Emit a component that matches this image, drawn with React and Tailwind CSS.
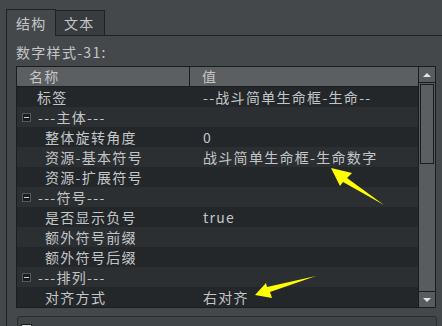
import React from "react";

const rows = [
  { name: "标签", value: "--战斗简单生命框-生命--", indent: 37 },
  { name: "---主体---", group: true },
  { name: "整体旋转角度", value: "0", indent: 45 },
  { name: "资源-基本符号", value: "战斗简单生命框-生命数字", indent: 45 },
  { name: "资源-扩展符号", value: "", indent: 45 },
  { name: "---符号---", group: true },
  { name: "是否显示负号", value: "true", indent: 45 },
  { name: "额外符号前缀", value: "", indent: 45 },
  { name: "额外符号后缀", value: "", indent: 45 },
  { name: "---排列---", group: true },
  { name: "对齐方式", value: "右对齐", indent: 45 },
];

function MinusBox() {
  return (
    <div className="w-[9px] h-[9px] bg-[#1b1d1f] border border-[#55595c] flex items-center justify-center">
      <div className="w-[5px] h-[1px] bg-[#c8cbcc]" />
    </div>
  );
}

export default function App() {
  return (
    <div
      className="relative w-[442px] h-[326px] overflow-hidden bg-[#45484b] text-[#c3c6c8] text-[14px] tracking-[1.3px]"
      style={{ fontFamily: '"Noto Sans CJK SC", "Noto Sans", sans-serif' }}
    >
      {/* tabs */}
      <div className="flex items-end pt-[9px] pl-[6px] h-[36px]">
        <div className="w-[50px] h-[27px] border border-b-0 border-[#1f2123] bg-[#45484b] flex items-center pl-[9px]">
          结构
        </div>
        <div className="w-[49px] h-[26px] border border-l-0 border-[#1f2123] bg-[#393c3f] flex items-center pl-[8px]">
          文本
        </div>
        <div className="flex-1 border-b border-[#1f2123]" />
      </div>

      {/* panel */}
      <div className="ml-[6px] border-l border-[#1f2123] h-[290px]">
        <div className="h-[30px] pl-[9px] pt-[7px] leading-[18px]">数字样式-31:</div>

        <div className="ml-[9px] flex">
          <div className="w-[403px] border border-[#1a1c1e] bg-[#25282a]">
            <div className="h-[20px] flex bg-[#5b5f62] border-b border-[#1a1c1e] leading-[19px]">
              <div className="w-[173px] border-r border-[#1a1c1e] pl-[12px]">名称</div>
              <div className="pl-[12px]">值</div>
            </div>
            {rows.map((r, i) => (
              <div
                key={i}
                className={
                  "h-[20px] flex items-center " +
                  (i % 2 === 0 ? "bg-[#24272a]" : "bg-[#2c2f32]")
                }
              >
                {r.group ? (
                  <div className="w-[173px] flex items-center pl-[5px] gap-[7px]">
                    <MinusBox />
                    <span>{r.name}</span>
                  </div>
                ) : (
                  <div className="w-[173px]" style={{ paddingLeft: r.indent - 17 }}>
                    {r.name}
                  </div>
                )}
                <div className="pl-[13px] whitespace-nowrap">{r.value}</div>
              </div>
            ))}
          </div>

          {/* scrollbar */}
          <div className="w-[17px] flex flex-col bg-[#585c5f] border-y border-r border-[#1a1c1e]">
            <div className="h-[16px] border-b border-[#1a1c1e] flex items-center justify-center">
              <div className="w-0 h-0 border-l-[4px] border-r-[4px] border-b-[4px] border-l-transparent border-r-transparent border-b-[#e2e4e5]" />
            </div>
            <div className="flex-1 pt-[1px] px-[1px]">
              <div className="h-[80px] border border-[#1a1c1e] bg-[#5b5f62]" />
            </div>
            <div className="h-[16px] border-t border-[#1a1c1e] flex items-center justify-center">
              <div className="w-0 h-0 border-l-[4px] border-r-[4px] border-t-[4px] border-l-transparent border-r-transparent border-t-[#e2e4e5]" />
            </div>
          </div>
        </div>

        {/* bottom box */}
        <div className="ml-[10px] mr-[5px] mt-[8px] h-[30px] rounded-[3px] border border-[#2a2c2e] bg-[#414447] flex items-start pt-[5px] pl-[3px] gap-[6px]">
          <div className="w-[11px] h-[11px] mt-[2px] bg-[#cfd2d3] border border-[#1a1c1e]" />
          <span>显示参数数字的样式信息</span>
        </div>
      </div>

      {/* annotation arrows */}
      <svg className="absolute inset-0 pointer-events-none" width="442" height="326">
        <polygon
          points="331,168 352,173 347,178 384,205 343,182 340,186"
          fill="#ffff00"
        />
        <polygon
          points="255,295 266,283 267,287 316,276 270,292 272,298"
          fill="#ffff00"
        />
      </svg>
    </div>
  );
}
